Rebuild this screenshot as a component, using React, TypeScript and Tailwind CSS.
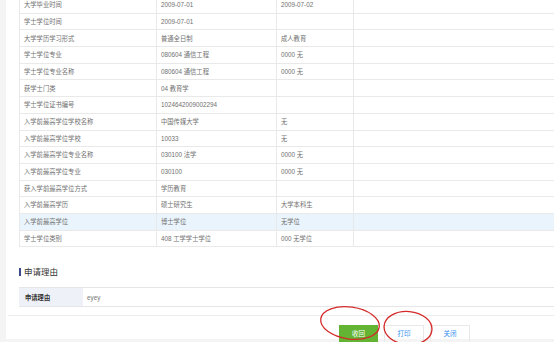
import React from "react";

const rows: [string, string, string][] = [
  ["大学毕业时间", "2009-07-01", "2009-07-02"],
  ["学士学位时间", "2009-07-01", ""],
  ["大学学历学习形式", "普通全日制", "成人教育"],
  ["学士学位专业", "080604 通信工程", "0000 无"],
  ["学士学位专业名称", "080604 通信工程", "0000 无"],
  ["获学士门类", "04 教育学", ""],
  ["学士学位证书编号", "1024642009002294", ""],
  ["入学前最高学位学校名称", "中国传媒大学", "无"],
  ["入学前最高学位学校", "10033", "无"],
  ["入学前最高学位专业名称", "030100 法学", "0000 无"],
  ["入学前最高学位专业", "030100", "0000 无"],
  ["获入学前最高学位方式", "学历教育", ""],
  ["入学前最高学历", "硕士研究生", "大学本科生"],
  ["入学前最高学位", "博士学位", "无学位"],
  ["学士学位类别", "408 工学学士学位", "000 无学位"],
];

function Row({ cells, active }: { cells: [string, string, string]; active?: boolean }) {
  return (
    <div
      className={`grid grid-cols-[137px_120px_77px_1fr] h-[16.7px] border-b border-[#e9e9e9] ${
        active ? "bg-[#eaf4fc]" : "bg-white"
      }`}
    >
      {cells.map((c, i) => (
        <div key={i} className="flex items-center pl-[4px] border-r border-[#e9e9e9] whitespace-nowrap">
          {c}
        </div>
      ))}
      <div />
    </div>
  );
}

export default function App() {
  return (
    <div
      className="relative w-[554px] h-[342px] overflow-hidden bg-[#f4f4f4] pl-[6px] text-[#707070]"
      style={{ fontFamily: '"Liberation Sans", "Noto Sans CJK SC", sans-serif' }}
    >
      <div className="h-full bg-white">
        <div className="pl-[13px]">
          <div className="-mt-[3px] border-l border-[#e9e9e9] text-[6.3px]">
            {rows.map((r, i) => (
              <Row key={i} cells={r} active={i === 13} />
            ))}
          </div>

          <div className="flex items-center gap-[3px] mt-[20px] h-[10px]">
            <div className="w-[2px] h-[8px] bg-[#3b4a8c]" />
            <span className="text-[8.5px] text-[#333] leading-none">申请理由</span>
          </div>

          <div className="mt-[10px] flex h-[20px] border-y border-[#e6e6e6] text-[6.3px]">
            <div className="w-[64px] bg-[#eef1f8] flex items-center pl-[6px] font-bold text-[#333]">
              申请理由
            </div>
            <div className="flex items-center pl-[4px] text-[#777]">eyey</div>
          </div>
        </div>

        <div className="mt-[8px] ml-[2px] border-t border-[#ececec] flex gap-[6px] pl-[331px] pt-[9px]">
          <div className="w-[39px] h-[18px] bg-[#62b432] text-white text-[6.5px] flex items-center justify-center">
            收回
          </div>
          <div className="w-[40px] h-[18px] border border-[#e8e8e8] text-[#2d8cf0] text-[6.5px] flex items-center justify-center">
            打印
          </div>
          <div className="w-[40px] h-[18px] border border-[#e8e8e8] text-[#2d8cf0] text-[6.5px] flex items-center justify-center">
            关闭
          </div>
        </div>
      </div>

      <svg className="absolute left-0 top-0 pointer-events-none" width="554" height="342">
        <ellipse cx="350" cy="323" rx="29.5" ry="16" fill="none" stroke="#d42a2a" strokeWidth="1.3" transform="rotate(8 350 323)" />
        <ellipse cx="408" cy="328" rx="24" ry="16.5" fill="none" stroke="#d42a2a" strokeWidth="1.3" transform="rotate(5 408 328)" />
      </svg>
    </div>
  );
}
